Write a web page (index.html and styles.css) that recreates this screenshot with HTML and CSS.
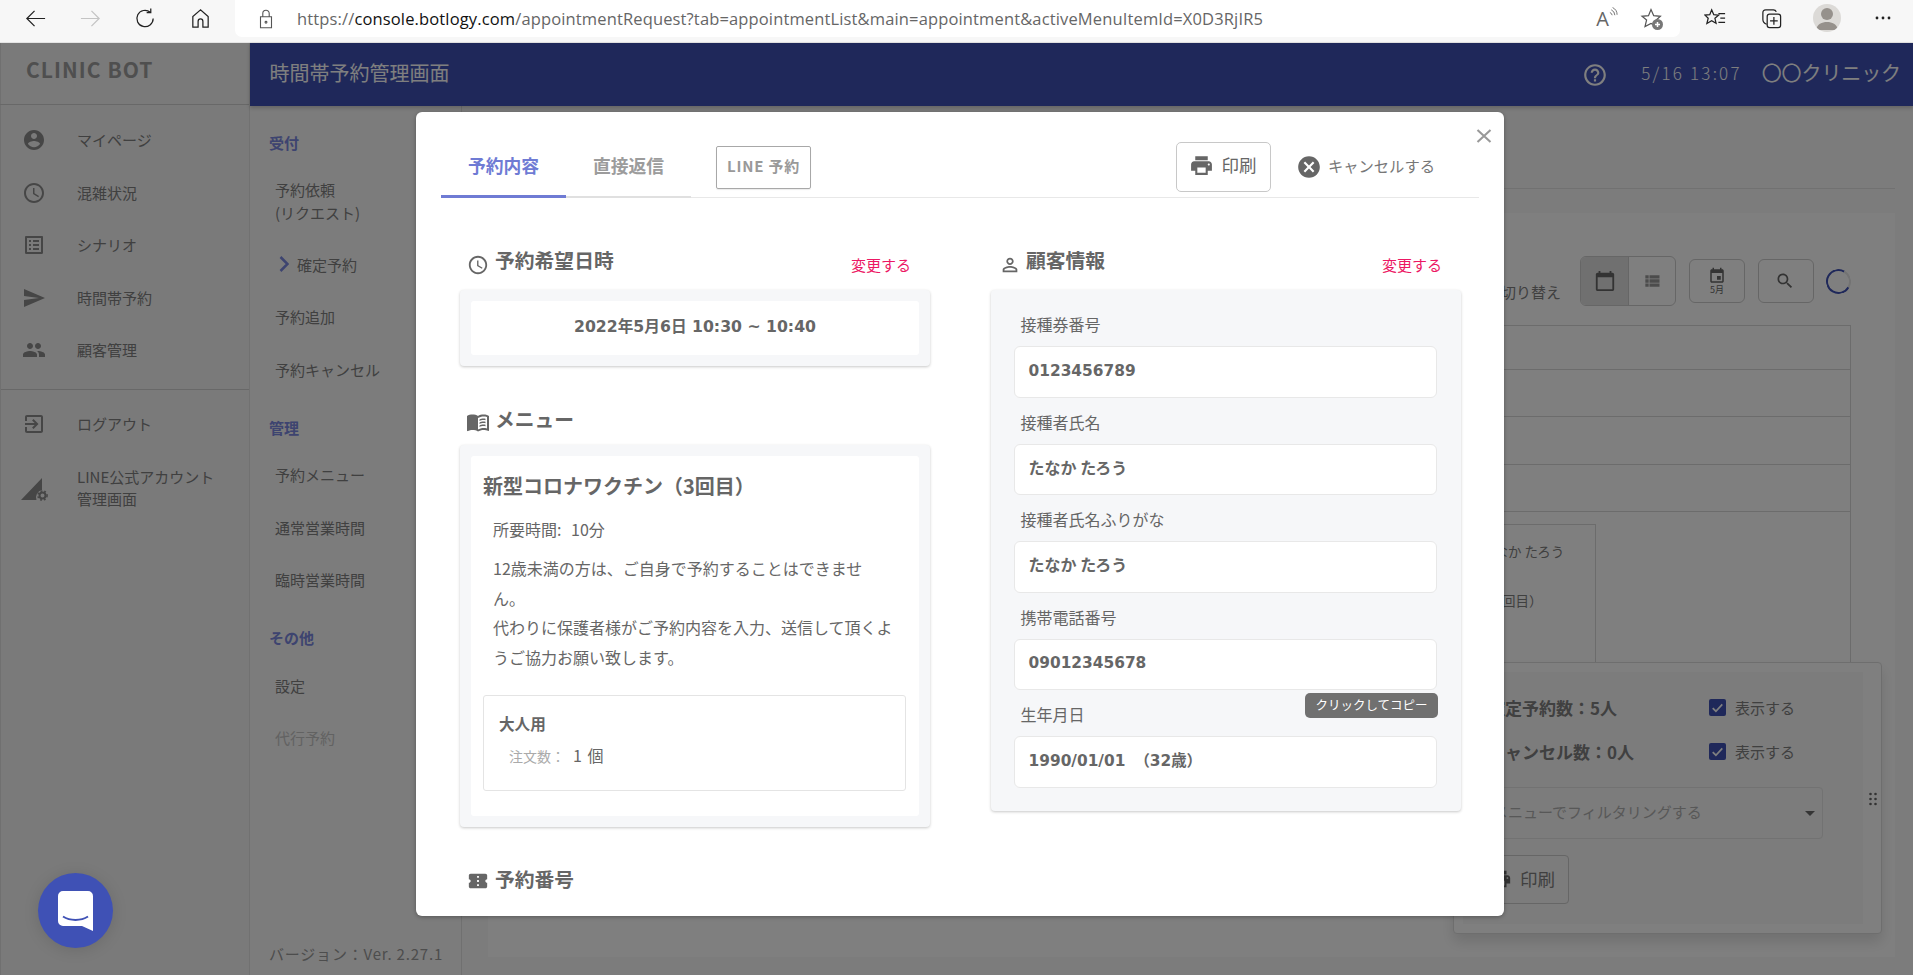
FILE: index.html
```html
<!DOCTYPE html>
<html lang="ja">
<head>
<meta charset="utf-8">
<title>時間帯予約管理画面</title>
<link rel="stylesheet" href="styles.css">
</head>
<body>
<svg class="sprite" aria-hidden="true">
  <symbol id="i-account" viewBox="0 0 24 24"><path d="M12 2C6.48 2 2 6.48 2 12s4.48 10 10 10 10-4.48 10-10S17.52 2 12 2zm0 3c1.66 0 3 1.34 3 3s-1.34 3-3 3-3-1.34-3-3 1.34-3 3-3zm0 14.2c-2.5 0-4.71-1.28-6-3.22.03-1.99 4-3.08 6-3.08 1.99 0 5.97 1.09 6 3.08-1.29 1.94-3.5 3.22-6 3.22z"/></symbol>
  <symbol id="i-clock" viewBox="0 0 24 24"><path d="M11.99 2C6.47 2 2 6.48 2 12s4.47 10 9.99 10C17.52 22 22 17.52 22 12S17.52 2 11.99 2zM12 20c-4.42 0-8-3.58-8-8s3.58-8 8-8 8 3.58 8 8-3.58 8-8 8zm.5-13H11v6l5.25 3.15.75-1.23-4.5-2.67z"/></symbol>
  <symbol id="i-list" viewBox="0 0 24 24"><path d="M19 5v14H5V5h14m1.1-2H3.9c-.5 0-.9.4-.9.9v16.2c0 .4.4.9.9.9h16.2c.4 0 .9-.5.9-.9V3.9c0-.5-.5-.9-.9-.9zM11 7h6v2h-6V7zm0 4h6v2h-6v-2zm0 4h6v2h-6v-2zM7 7h2v2H7V7zm0 4h2v2H7v-2zm0 4h2v2H7v-2z"/></symbol>
  <symbol id="i-send" viewBox="0 0 24 24"><path d="M2.01 21L23 12 2.01 3 2 10l15 2-15 2z"/></symbol>
  <symbol id="i-people" viewBox="0 0 24 24"><path d="M16 11c1.66 0 2.99-1.34 2.99-3S17.66 5 16 5c-1.66 0-3 1.34-3 3s1.34 3 3 3zm-8 0c1.66 0 2.99-1.34 2.99-3S9.66 5 8 5C6.34 5 5 6.34 5 8s1.34 3 3 3zm0 2c-2.33 0-7 1.17-7 3.5V19h14v-2.5c0-2.33-4.67-3.5-7-3.5zm8 0c-.29 0-.62.02-.97.05 1.16.84 1.97 1.97 1.97 3.45V19h6v-2.5c0-2.33-4.67-3.5-7-3.5z"/></symbol>
  <symbol id="i-exit" viewBox="0 0 24 24"><path d="M10.09 15.59L11.5 17l5-5-5-5-1.41 1.41L12.67 11H3v2h9.67l-2.58 2.59zM19 3H5c-1.11 0-2 .9-2 2v4h2V5h14v14H5v-4H3v4c0 1.1.89 2 2 2h14c1.1 0 2-.9 2-2V5c0-1.1-.9-2-2-2z"/></symbol>
  <symbol id="i-print" viewBox="0 0 24 24"><path d="M19 8H5c-1.66 0-3 1.34-3 3v6h4v4h12v-4h4v-6c0-1.66-1.34-3-3-3zm-3 11H8v-5h8v5zm3-7c-.55 0-1-.45-1-1s.45-1 1-1 1 .45 1 1-.45 1-1 1zm-1-9H6v4h12V3z"/></symbol>
  <symbol id="i-cancel" viewBox="0 0 24 24"><path d="M12 2C6.47 2 2 6.47 2 12s4.47 10 10 10 10-4.47 10-10S17.53 2 12 2zm5 13.59L15.59 17 12 13.41 8.41 17 7 15.59 10.59 12 7 8.41 8.41 7 12 10.59 15.59 7 17 8.41 13.41 12 17 15.59z"/></symbol>
  <symbol id="i-help" viewBox="0 0 24 24"><path d="M11 18h2v-2h-2v2zm1-16C6.48 2 2 6.48 2 12s4.48 10 10 10 10-4.48 10-10S17.52 2 12 2zm0 18c-4.41 0-8-3.59-8-8s3.59-8 8-8 8 3.59 8 8-3.59 8-8 8zm0-14c-2.21 0-4 1.79-4 4h2c0-1.1.9-2 2-2s2 .9 2 2c0 2-3 1.75-3 5h2c0-2.25 3-2.5 3-5 0-2.21-1.79-4-4-4z"/></symbol>
  <symbol id="i-person" viewBox="0 0 24 24"><path d="M12 5.9c1.16 0 2.1.94 2.1 2.1s-.94 2.1-2.1 2.1S9.9 9.16 9.9 8s.94-2.1 2.1-2.1m0 9c2.97 0 6.1 1.46 6.1 2.1v1.1H5.9V17c0-.64 3.13-2.1 6.1-2.1M12 4C9.79 4 8 5.79 8 8s1.79 4 4 4 4-1.79 4-4-1.79-4-4-4zm0 9c-2.67 0-8 1.34-8 4v3h16v-3c0-2.66-5.33-4-8-4z"/></symbol>
  <symbol id="i-book" viewBox="0 0 24 24"><path d="M21 5c-1.11-.35-2.33-.5-3.5-.5-1.95 0-4.05.4-5.5 1.5-1.45-1.1-3.55-1.5-5.5-1.5S2.45 4.9 1 6v14.65c0 .25.25.5.5.5.1 0 .15-.05.25-.05C3.1 20.45 5.05 20 6.5 20c1.95 0 4.05.4 5.5 1.5 1.35-.85 3.8-1.5 5.5-1.5 1.65 0 3.35.3 4.75 1.05.1.05.15.05.25.05.25 0 .5-.25.5-.5V6c-.6-.45-1.25-.75-2-1zm0 13.5c-1.1-.35-2.3-.5-3.5-.5-1.7 0-4.15.65-5.5 1.5V8c1.35-.85 3.8-1.5 5.5-1.5 1.2 0 2.4.15 3.5.5v11.5z"/><path d="M13.5 9.5c1-.6 2.6-1 4-1 .7 0 1.5.1 2 .2v1.5c-.6-.1-1.3-.2-2-.2-1.5 0-3 .4-4 1zM13.5 12.5c1-.6 2.6-1 4-1 .7 0 1.5.1 2 .2v1.5c-.6-.1-1.3-.2-2-.2-1.5 0-3 .4-4 1zM13.5 15.5c1-.6 2.6-1 4-1 .7 0 1.5.1 2 .2v1.5c-.6-.1-1.3-.2-2-.2-1.5 0-3 .4-4 1z"/></symbol>
  <symbol id="i-ticket" viewBox="0 0 24 24"><path d="M22 10V6c0-1.11-.9-2-2-2H4c-1.1 0-1.99.89-1.99 2v4c1.1 0 1.99.9 1.99 2s-.89 2-2 2v4c0 1.1.9 2 2 2h16c1.1 0 2-.9 2-2v-4c-1.1 0-2-.9-2-2s.9-2 2-2zm-9 7.5h-2v-2h2v2zm0-4.5h-2v-2h2v2zm0-4.5h-2v-2h2v2z"/></symbol>
  <symbol id="i-cal" viewBox="0 0 24 24"><path d="M20 3h-1V1h-2v2H7V1H5v2H4c-1.1 0-2 .9-2 2v16c0 1.1.9 2 2 2h16c1.1 0 2-.9 2-2V5c0-1.1-.9-2-2-2zm0 18H4V8h16v13z"/></symbol>
  <symbol id="i-event" viewBox="0 0 24 24"><path d="M17 12h-5v5h5v-5zM16 1v2H8V1H6v2H5c-1.11 0-1.99.9-1.99 2L3 19c0 1.1.89 2 2 2h14c1.1 0 2-.9 2-2V5c0-1.1-.9-2-2-2h-1V1h-2zm3 18H5V8h14v11z"/></symbol>
  <symbol id="i-viewlist" viewBox="0 0 24 24"><path d="M4 14h4v-4H4v4zm0 5h4v-4H4v4zM4 9h4V5H4v4zm5 5h12v-4H9v4zm0 5h12v-4H9v4zM9 5v4h12V5H9z"/></symbol>
  <symbol id="i-search" viewBox="0 0 24 24"><path d="M15.5 14h-.79l-.28-.27C15.41 12.59 16 11.11 16 9.5 16 5.91 13.09 3 9.5 3S3 5.91 3 9.5 5.91 16 9.5 16c1.61 0 3.09-.59 4.23-1.57l.27.28v.79l5 4.99L20.49 19l-4.99-5zm-6 0C7.01 14 5 11.99 5 9.5S7.01 5 9.5 5 14 7.01 14 9.5 11.99 14 9.5 14z"/></symbol>
</svg>

<div class="toolbar">
  <span class="tb-btn"><svg class="tb-ico" viewBox="0 0 24 24"><path d="M22 12H3M11 4l-8 8 8 8"/></svg></span>
  <span class="tb-btn"><svg class="tb-ico tb-ico-off" viewBox="0 0 24 24"><path d="M2 12h19M13 4l8 8-8 8"/></svg></span>
  <span class="tb-btn"><svg class="tb-ico" viewBox="0 0 24 24"><path d="M20 12a8.5 8.5 0 1 1-3-6.5M17.5 1.5v4.3h-4.3"/></svg></span>
  <span class="tb-btn"><svg class="tb-ico" viewBox="0 0 24 24"><path d="M12 3 4 10v11h5.5v-6a2.5 2.5 0 0 1 5 0v6H20V10z"/></svg></span>
  <div class="address">
    <svg class="tb-lock" viewBox="0 0 18 24"><path d="M3 9.5h12v12H3zM5.5 9.5V6a3.5 3.5 0 0 1 7 0v3.5"/><circle cx="9" cy="15.5" r="1" /></svg>
    <span class="url">https://<b class="url-host">console.botlogy.com</b>/appointmentRequest?tab=appointmentList&amp;main=appointment&amp;activeMenuItemId=X0D3RjIR5</span>
    <span class="read-aloud">A<svg viewBox="0 0 10 12"><path d="M1 6a4 4 0 0 1 2.500 3M2.500 3a7 7 0 0 1 4 6M4 .5a9 9 0 0 1 5 8"/></svg></span>
    <svg class="star-add" viewBox="0 0 24 24"><path d="M11 2.500l2.700 6.200 6.700.6-5 4.500 1 5.500-5.400-2.900-6 3.200 1.600-6.600L2 9.300l6.500-.6z"/><circle class="star-dot" cx="17.500" cy="17.500" r="5.500"/><path class="star-plus" d="M17.500 15v5M15 17.500h5"/></svg>
  </div>
  <span class="tb-right"><svg class="tb-ico" viewBox="0 0 24 24"><path d="M8 3l2.200 5 5 .5-3.800 3.300 1.200 5.200-4.600-2.800-5 3 1.400-5.500L1 8.500l5-.5zM15 7h7M17 11.500h5M15 16h7"/></svg></span>
  <span class="tb-right"><svg class="tb-ico" viewBox="0 0 24 24"><path d="M7 18C4 17 3 15 3 13V6c0-2 1-3 3-3h8c1.500 0 2.500.8 3 2"/><rect x="7.500" y="7.500" width="14" height="14" rx="2.500"/><path d="M14.500 10.500v8M10.500 14.500h8"/></svg></span>
  <span class="tb-right"><span class="avatar"><svg viewBox="0 0 28 28"><circle cx="14" cy="10" r="6"/><path d="M3 26c1-6 6-8 11-8s10 2 11 8z"/></svg></span></span>
  <span class="tb-right"><svg class="tb-dots" viewBox="0 0 16 4"><circle cx="2" cy="2" r="1.400"/><circle cx="8" cy="2" r="1.400"/><circle cx="14" cy="2" r="1.400"/></svg></span>
</div>

<div class="app">
  <aside class="side">
    <div class="brand">CLINIC BOT</div>
    <nav class="side-nav">
      <a class="side-item"><svg class="side-ico"><use href="#i-account"/></svg>マイページ</a>
      <a class="side-item"><svg class="side-ico"><use href="#i-clock"/></svg>混雑状況</a>
      <a class="side-item"><svg class="side-ico"><use href="#i-list"/></svg>シナリオ</a>
      <a class="side-item"><svg class="side-ico"><use href="#i-send"/></svg>時間帯予約</a>
      <a class="side-item"><svg class="side-ico"><use href="#i-people"/></svg>顧客管理</a>
    </nav>
    <nav class="side-nav side-nav-bottom">
      <a class="side-item"><svg class="side-ico"><use href="#i-exit"/></svg>ログアウト</a>
      <a class="side-item"><svg class="side-ico side-ico-line" viewBox="0 0 27 24"><path d="M0 23 21 1v12a7.500 7.500 0 0 0-5.500 10z"/><circle class="gear-ring" cx="21.500" cy="18.500" r="3"/><circle class="gear-teeth" cx="21.500" cy="18.500" r="4.600"/></svg><span>LINE公式アカウント<br>管理画面</span></a>
    </nav>
  </aside>

  <div class="content">
    <header class="topbar">
      <h1 class="topbar-title">時間帯予約管理画面</h1>
      <svg class="topbar-help"><use href="#i-help"/></svg>
      <span class="topbar-time">5/16 13:07</span>
      <span class="topbar-clinic">〇〇クリニック</span>
    </header>
    <div class="content-body">
      <aside class="subnav">
        <div class="subnav-title">受付</div>
        <a class="subnav-item subnav-item-tall">予約依頼<br>(リクエスト)</a>
        <a class="subnav-item subnav-item-on"><svg class="chev" viewBox="0 0 10 16"><path d="M1.500 1 8.500 8l-7 7"/></svg>確定予約</a>
        <a class="subnav-item">予約追加</a>
        <a class="subnav-item">予約キャンセル</a>
        <div class="subnav-title">管理</div>
        <a class="subnav-item">予約メニュー</a>
        <a class="subnav-item">通常営業時間</a>
        <a class="subnav-item">臨時営業時間</a>
        <div class="subnav-title">その他</div>
        <a class="subnav-item">設定</a>
        <a class="subnav-item subnav-item-off">代行予約</a>
        <div class="version">バージョン：Ver. 2.27.1</div>
      </aside>
      <main class="main">
        <div class="main-head"></div>
        <section class="sheet">
          <div class="controls">
            <span class="controls-label">表示切り替え</span>
            <div class="toggle">
              <span class="toggle-btn toggle-btn-on"><svg class="ctl-ico-big"><use href="#i-cal"/></svg></span>
              <span class="toggle-btn"><svg class="ctl-ico-small"><use href="#i-viewlist"/></svg></span>
            </div>
            <span class="ctl-btn ctl-btn-month"><svg class="ctl-ico-month"><use href="#i-event"/></svg><span class="ctl-month">5月</span></span>
            <span class="ctl-btn"><svg class="ctl-ico-search"><use href="#i-search"/></svg></span>
            <span class="spinner"></span>
          </div>
          <div class="grid">
            <div class="grid-row"></div>
            <div class="grid-row"></div>
            <div class="grid-row"></div>
            <div class="grid-row"></div>
            <div class="grid-row grid-row-events">
              <div class="event">
                <span>たなか たろう</span>
                <span>（3回目）</span>
              </div>
            </div>
          </div>
        </section>
        <div class="float-panel">
          <div class="float-inner">
            <div class="float-row"><b class="float-count">確定予約数：5人</b><span class="check"><svg viewBox="0 0 16 16"><path d="M3.500 8.500 6.500 11.500 12.500 5"/></svg></span><span>表示する</span></div>
            <div class="float-row"><b class="float-count">キャンセル数：0人</b><span class="check"><svg viewBox="0 0 16 16"><path d="M3.500 8.500 6.500 11.500 12.500 5"/></svg></span><span>表示する</span></div>
            <div class="float-select"><span>メニューでフィルタリングする</span><i class="caret"></i></div>
            <div class="float-print"><svg class="float-print-ico"><use href="#i-print"/></svg>印刷</div>
          </div>
          <svg class="drag" viewBox="0 0 8 14"><circle cx="1.500" cy="2" r="1.300"/><circle cx="6.500" cy="2" r="1.300"/><circle cx="1.500" cy="7" r="1.300"/><circle cx="6.500" cy="7" r="1.300"/><circle cx="1.500" cy="12" r="1.300"/><circle cx="6.500" cy="12" r="1.300"/></svg>
        </div>
      </main>
    </div>
  </div>
</div>

<div class="backdrop"></div>

<div class="modal">
  <svg class="modal-close" viewBox="0 0 16 16"><path d="M1.500 2l13 12M14.500 2l-13 12"/></svg>
  <div class="modal-head">
    <a class="tab tab-on">予約内容</a>
    <a class="tab">直接返信</a>
    <a class="line-btn">LINE 予約</a>
    <a class="print-btn"><svg class="print-ico"><use href="#i-print"/></svg>印刷</a>
    <a class="cancel-btn"><svg class="cancel-ico"><use href="#i-cancel"/></svg>キャンセルする</a>
  </div>
  <div class="modal-body">
    <div class="col">
      <div class="sec-head sec-head-link">
        <h2 class="sec-title"><svg class="sec-ico"><use href="#i-clock"/></svg>予約希望日時</h2>
        <a class="change">変更する</a>
      </div>
      <div class="card">
        <div class="card-inner date-text">2022年5月6日 10:30 ~ 10:40</div>
      </div>
      <div class="sec-head sec-head-next">
        <h2 class="sec-title"><svg class="sec-ico sec-ico-book"><use href="#i-book"/></svg>メニュー</h2>
      </div>
      <div class="card">
        <div class="card-inner menu-inner">
          <h3 class="menu-name">新型コロナワクチン（3回目）</h3>
          <p class="menu-time">所要時間: 10分</p>
          <p class="menu-desc">12歳未満の方は、ご自身で予約することはできません。<br>代わりに保護者様がご予約内容を入力、送信して頂くようご協力お願い致します。</p>
          <div class="option">
            <div class="option-name">大人用</div>
            <div class="option-qty"><span class="option-label">注文数：</span>1 個</div>
          </div>
        </div>
      </div>
      <div class="sec-head sec-head-last">
        <h2 class="sec-title"><svg class="sec-ico"><use href="#i-ticket"/></svg>予約番号</h2>
      </div>
    </div>
    <div class="col">
      <div class="sec-head sec-head-link">
        <h2 class="sec-title sec-title-person"><svg class="sec-ico-person"><use href="#i-person"/></svg>顧客情報</h2>
        <a class="change">変更する</a>
      </div>
      <div class="card card-form">
        <label class="field-label">接種券番号</label>
        <div class="value num">0123456789</div>
        <label class="field-label">接種者氏名</label>
        <div class="value">たなか たろう</div>
        <label class="field-label">接種者氏名ふりがな</label>
        <div class="value">たなか たろう</div>
        <label class="field-label">携帯電話番号</label>
        <div class="value num">09012345678<span class="tip">クリックしてコピー</span></div>
        <label class="field-label">生年月日</label>
        <div class="value num">1990/01/01<span class="value-age">（32歳）</span></div>
      </div>
    </div>
  </div>
</div>

<a class="chat">
  <svg viewBox="0 0 35 40"><path class="chat-bubble" d="M5 0h25a5 5 0 0 1 5 5v35l-11-5H5a5 5 0 0 1-5-5V5a5 5 0 0 1 5-5z"/><path class="chat-smile" d="M5 25.500c7 4.500 18 4.500 25 0"/></svg>
</a>
</body>
</html>
```

FILE: styles.css
```css
* { box-sizing: border-box; }
html, body { margin: 0; height: 975px; overflow: hidden; }
body {
  position: relative;
  font-family: "Noto Sans CJK JP", sans-serif;
  font-size: 15px;
  color: #808080;
  background: #f8f8f8;
  text-spacing-trim: space-all;
}
h1, h2, h3, p { margin: 0; font-weight: inherit; font-size: inherit; }
.sprite { display: none; }

/* browser toolbar */
.toolbar {
  height: 43px;
  display: flex;
  background: #f7f7f7;
  border-bottom: 1px solid #e4e4e4;
  padding-left: 7.5px;
}
.tb-btn { width: 55px; height: 36px; display: flex; align-items: center; justify-content: center; flex: none; }
.tb-ico { width: 23px; height: 23px; fill: none; stroke: #222; stroke-width: 1.300; }
.tb-ico-off { stroke: #c4c4c4; }
.address {
  margin-left: 7.500px;
  width: 1445px;
  height: 37px;
  background: #fff;
  border-radius: 0 0 7px 7px;
  display: flex;
  align-items: center;
  padding-left: 22px;
  flex: none;
}
.tb-lock { width: 18px; height: 22px; fill: none; stroke: #555; stroke-width: 1.200; flex: none; }
.url {
  margin-left: 22px;
  font-family: "Open Sans", sans-serif;
  font-size: 16.500px;
  color: #666;
  white-space: nowrap;
  letter-spacing: .14px;
}
.url-host { font-weight: 400; color: #111; }
.read-aloud {
  margin-left: auto;
  font-family: "Open Sans", sans-serif;
  font-size: 20px;
  color: #666;
  display: flex;
  align-items: flex-start;
  line-height: 22px;
}
.read-aloud svg { width: 9px; height: 11px; margin-top: -1px; fill: none; stroke: #666; stroke-width: 1; }
.star-add { width: 24px; height: 24px; margin: 0 16px 0 22px; fill: none; stroke: #555; stroke-width: 1.200; flex: none; }
.star-dot { fill: #777; stroke: none; }
.star-plus { stroke: #fff; stroke-width: 1.500; }
.tb-right { width: 56px; height: 36px; display: flex; align-items: center; justify-content: center; flex: none; }
.address + .tb-right { margin-left: 7px; }
.avatar { width: 28px; height: 28px; border-radius: 50%; background: #dcdad7; overflow: hidden; display: block; }
.avatar svg { display: block; width: 28px; height: 28px; fill: #96918c; }
.tb-dots { width: 16px; height: 4px; fill: #222; }

/* app frame */
.app { display: flex; height: 932px; }
.side {
  width: 250px;
  flex: none;
  background: #f4f4f4;
  border-left: 1px solid #e0e0e0;
  border-right: 1px solid #e2e2e2;
}
.brand {
  height: 62px;
  padding: 0 0 9px 26px;
  display: flex;
  align-items: center;
  border-bottom: 1px solid #d0d0d0;
  font-size: 21px;
  font-weight: 700;
  color: #9e9e9e;
  letter-spacing: 1.050px;
  margin-left: -1px;
}
.side-nav { padding: 9px 0 12px; border-bottom: 1px solid #d0d0d0; }
.side-nav-bottom { border-bottom: 0; padding-top: 8px; }
.side-item { height: 52.500px; display: flex; align-items: center; color: #808080; font-size: 15px; line-height: 22.500px; }
.side-nav-bottom .side-item:last-child { height: 76px; }
.side-ico { width: 24px; height: 24px; margin: 0 31px 0 21px; flex: none; }
.side-item .side-ico { fill: #8c8c8c; }
.side-item .side-ico-line { width: 27px; height: 24px; margin: 2px 29px 0 20px; }
.gear-ring { fill: none; stroke: #8c8c8c; stroke-width: 2; }
.gear-teeth { fill: none; stroke: #8c8c8c; stroke-width: 1.500; stroke-dasharray: 1.800 2.020; }

.content { flex: 1; display: flex; flex-direction: column; min-width: 0; }
.topbar {
  height: 63px;
  background: #3f51b5;
  color: #fff;
  display: flex;
  align-items: center;
  padding: 0 12px 5px 19.500px;
  box-shadow: 0 2px 4px rgba(0,0,0,.2);
  position: relative;
}
.topbar-title { font-size: 20px; }
.topbar-help { width: 26px; height: 26px; margin: 6px 0 0 auto; fill: #fff; }
.topbar-time { margin-left: 33px; font-size: 17px; letter-spacing: 2.200px; font-weight: 300; }
.topbar-clinic { margin-left: 20px; font-size: 20px; letter-spacing: -.1px; white-space: nowrap; }

.content-body { flex: 1; display: flex; min-height: 0; }
.subnav {
  width: 212px;
  flex: none;
  background: #f8f8f8;
  border-right: 1px solid #e0e0e0;
  padding: 5px 0 10px 19px;
  display: flex;
  flex-direction: column;
}
.subnav-title { margin: 21px 0 10px; height: 22px; line-height: 22px; font-size: 15px; font-weight: 700; color: #7b88e0; flex: none; }
.subnav-item { height: 52.500px; padding-left: 6px; display: flex; align-items: center; line-height: 23px; color: #808080; flex: none; }
.subnav-item-tall { height: 74px; display: block; padding-top: 14px; }
.subnav-item-on { padding-left: 10px; }
.chev { width: 10px; height: 16px; margin-right: 8px; fill: none; stroke: #7b88e0; stroke-width: 2.500; }
.subnav-item-off { color: #c4c4c4; }
.version { margin-top: auto; line-height: 22px; color: #9a9a9a; font-size: 15px; letter-spacing: .8px; white-space: nowrap; }

.main { flex: 1; min-width: 0; padding: 0 18px 18px 26px; display: flex; flex-direction: column; }
.main-head { height: 83px; border-bottom: 1px solid #e2e2e2; flex: none; margin-bottom: 24px; }
.sheet { flex: 1; background: #fff; padding: 43px 44px 0 32px; min-height: 0; }
.controls { height: 50px; display: flex; align-items: center; justify-content: flex-end; margin-bottom: 19px; }
.controls-label { margin: 21px 19px 0 0; font-size: 15px; color: #808080; }
.toggle { width: 96px; height: 50px; display: flex; border: 1px solid #ccc; border-radius: 6px; overflow: hidden; margin-right: 13px; }
.toggle-btn { flex: 1; display: flex; align-items: center; justify-content: center; }
.toggle-btn-on { background: #e0e0e0; border-right: 1px solid #ccc; flex: none; width: 48px; }
.ctl-ico-big { width: 22px; height: 22px; fill: #666; }
.ctl-ico-small { width: 20px; height: 20px; fill: #999; }
.ctl-btn { width: 56px; height: 44px; border: 1px solid #ccc; border-radius: 6px; display: flex; align-items: center; justify-content: center; margin-right: 13px; }
.ctl-btn-month { flex-direction: column; margin-right: 13px; }
.ctl-ico-month { width: 18px; height: 18px; fill: #666; }
.ctl-month { font-size: 9px; line-height: 11px; color: #666; margin-top: -1px; }
.ctl-ico-search { width: 20px; height: 20px; margin-left: -3px; fill: #666; }
.spinner {
  width: 25px;
  height: 25px;
  margin-left: -1px;
  border-radius: 50%;
  border: 2px solid #e6e6e6;
  border-left-color: #3f51b5;
  border-bottom-color: #3f51b5;
  border-top-color: #3f51b5;
  transform: rotate(-15deg);
  flex: none;
}
.grid { height: 580px; border: 1px solid #d8d8d8; border-bottom: 0; }
.grid-row { height: 47.300px; border-bottom: 1px solid #d8d8d8; }
.grid-row:first-child { height: 44px; }
.grid-row-events { height: auto; border-bottom: 0; padding: 12px 0 0; display: flex; justify-content: flex-end; padding-right: 254px; }
.event {
  width: 160px;
  height: 380px;
  border: 1px solid #d8d8d8;
  border-right-width: 1px;
  padding: 16px 0 0 44px;
  display: flex;
  flex-direction: column;
  gap: 29px;
  font-size: 13.500px;
  line-height: 20px;
  color: #808080;
  white-space: nowrap;
}

.float-panel {
  position: absolute;
  right: 31px;
  bottom: 41px;
  width: 429px;
  height: 272px;
  background: #fff;
  border: 1px solid #ddd;
  border-radius: 4px;
  padding: 9px 18px 9px 9px;
  box-shadow: 0 8px 14px rgba(0,0,0,.12);
}
.float-inner { height: 100%; background: #f8f8f8; padding: 13px 40px 0 25px; }
.float-row { height: 44px; display: flex; align-items: center; font-size: 15px; color: #808080; }
.float-count { width: 221px; font-size: 17px; font-weight: 700; white-space: nowrap; }
.check { width: 17px; height: 17px; margin-right: 9px; background: #3f51b5; border-radius: 2px; display: block; flex: none; }
.check svg { display: block; width: 17px; height: 17px; fill: none; stroke: #fff; stroke-width: 1.600; }
.float-select {
  margin-top: 14px;
  height: 52px;
  border: 1px solid #e4e4e4;
  border-radius: 4px;
  display: flex;
  align-items: center;
  justify-content: space-between;
  padding: 0 3px 4px 4px;
  color: #b0b0b0;
  font-size: 15px;
  white-space: nowrap;
}
.caret { width: 0; height: 0; margin: 4px 4px 0 0; border: 5px solid transparent; border-top: 5px solid #6a6a6a; border-bottom: 0; }
.float-print {
  margin-top: 16px;
  width: 81px;
  height: 49px;
  border: 1px solid #ccc;
  border-radius: 4px;
  display: flex;
  align-items: center;
  justify-content: flex-end;
  padding: 0 13px 2px 0;
  gap: 8px;
  font-size: 17.500px;
  color: #808080;
}
.float-print-ico { width: 22px; height: 22px; fill: #666; }
.drag { position: absolute; left: 415px; top: 129px; width: 8px; height: 14px; fill: #666; }

/* overlay */
.backdrop { position: absolute; left: 0; right: 0; top: 43px; bottom: 0; background: rgba(0,0,0,.5); }
.chat {
  position: absolute;
  left: 37.500px;
  top: 872.500px;
  width: 75px;
  height: 75px;
  border-radius: 50%;
  background: #3f51b5;
  box-shadow: 0 2px 16px rgba(0,0,0,.12);
  display: flex;
  align-items: center;
  justify-content: center;
}
.chat svg { width: 35px; height: 40px; margin-top: 2px; }
.chat-bubble { fill: #fff; }
.chat-smile { fill: none; stroke: #3f51b5; stroke-width: 2; }

.modal {
  position: absolute;
  left: 416px;
  top: 112px;
  width: 1088px;
  height: 804px;
  background: #fff;
  border-radius: 6px;
  overflow: hidden;
  color: #666;
  box-shadow: 0 1px 4px rgba(0,0,0,.3);
}
.modal-close { position: absolute; top: 16px; right: 12px; width: 16px; height: 16px; fill: none; stroke: #999; stroke-width: 2.100; }
.modal-head {
  margin: 0 25px;
  height: 86px;
  display: flex;
  align-items: flex-end;
  border-bottom: 1px solid #e8e8e8;
  padding-right: 44px;
}
.tab {
  width: 125px;
  height: 50px;
  margin-bottom: -1px;
  padding-top: 1px;
  text-align: center;
  font-size: 17.800px;
  line-height: 33px;
  font-weight: 700;
  color: #9c9c9c;
  border-bottom: 2px solid #e0e0e0;
}
.tab-on { color: #6f7bd4; border-bottom: 3px solid #6f7bd4; }
.line-btn {
  margin: 0 0 8px 25px;
  width: 95px;
  height: 43px;
  padding-bottom: 5px;
  border: 1px solid #a8a8a8;
  border-radius: 2px;
  display: flex;
  align-items: center;
  justify-content: center;
  font-size: 15px;
  letter-spacing: .8px;
  font-weight: 700;
  color: #999;
  box-shadow: 0 1px 1px rgba(0,0,0,.08);
}
.print-btn {
  margin: 0 27px 5px auto;
  width: 95px;
  height: 50px;
  padding-bottom: 5px;
  border: 1px solid #c8c8c8;
  border-radius: 5px;
  display: flex;
  align-items: center;
  justify-content: center;
  gap: 7px;
  font-size: 17.500px;
  color: #666;
}
.print-ico { width: 25px; height: 25px; margin-top: 2px; margin-left: -1px; fill: #666; }
.cancel-btn { margin-bottom: 17px; height: 30px; display: flex; align-items: center; gap: 8px; font-size: 15.300px; color: #777; white-space: nowrap; }
.cancel-ico { width: 26px; height: 26px; margin: 3px -2px 0 -2px; fill: #666; }

.modal-body { display: flex; gap: 61px; padding: 49px 0 0 44px; }
.col { width: 470px; flex: none; }
.sec-head { display: flex; justify-content: space-between; align-items: flex-start; height: 28px; margin-bottom: 12px; }
.sec-head-link { height: 31px; }
.sec-head-next { margin-top: 39px; }
.sec-head-last { margin-top: 38px; }
.sec-title { display: flex; align-items: center; line-height: 28px; font-size: 19.800px; font-weight: 700; color: #666; padding-left: 7px; white-space: nowrap; }
.sec-head-link .sec-title { margin-top: -2.400px; }
.sec-head-next .sec-title { margin-top: -1px; }
.sec-title-person { padding-left: 8px; }
.sec-ico { width: 22px; height: 22px; margin-right: 6px; margin-top: 4px; fill: #666; flex: none; }
.sec-head-link .sec-ico { margin-top: 9px; }
.sec-head-next .sec-ico { margin-top: 6px; }
.sec-ico-book { width: 24px; height: 24px; margin-left: -1px; margin-right: 5px; }
.sec-ico-person { width: 22px; height: 22px; margin-right: 5px; margin-top: 9px; fill: #666; flex: none; }
.change { margin: 7px 19px 0 0; line-height: 22px; font-size: 15px; color: #ec1864; }

.card { background: #f6f7f9; border-radius: 4px; padding: 11px; box-shadow: 0 1px 3px rgba(0,0,0,.22); }
.card-inner { background: #fff; border-radius: 3px; }
.date-text { height: 54px; padding-bottom: 5px; display: flex; align-items: center; justify-content: center; font-family: "DejaVu Sans", "Noto Sans CJK JP", sans-serif; font-size: 15.700px; font-weight: 700; color: #666; }
.menu-inner { padding: 15px 13px 25px 12px; }
.menu-name { font-size: 20px; line-height: 30px; font-weight: 700; color: #666; white-space: nowrap; }
.menu-time { margin: 13px 0 0 10px; font-size: 16px; line-height: 30px; word-spacing: 6px; }
.menu-desc { margin: 10px 0 0 10px; width: 401px; font-size: 16px; line-height: 29.600px; }
.option { margin-top: 23px; height: 96px; border: 1px solid #e4e4e4; border-radius: 3px; padding: 15px 0 0 15px; }
.option-name { font-size: 15.600px; line-height: 24px; font-weight: 700; color: #666; }
.option-qty { margin: 8px 0 0 10px; line-height: 24px; font-size: 16px; word-spacing: 2px; }
.option-label { font-size: 14px; color: #aaa; margin-right: 8px; }

.card-form { padding: 24px 24px 23.500px 23px; }
.field-label { display: block; height: 24px; line-height: 21px; margin: 14px 0 8px; padding-left: 6.500px; font-size: 16px; color: #666; }
.field-label:first-child { margin-top: 0; }
.value { position: relative; height: 51.500px; background: #fff; border: 1px solid #e8e8e8; border-radius: 6px; padding: 10px 0 0 13.500px; font-size: 16px; line-height: 24px; font-weight: 700; color: #666; }
.num { font-family: "DejaVu Sans", "Noto Sans CJK JP", sans-serif; font-size: 15.400px; padding-top: 11.500px; }
.value-age { margin-left: 9px; }
.tip {
  position: absolute;
  right: -2px;
  top: calc(100% + 4px);
  width: 133px;
  height: 25px;
  background: #707070;
  border-radius: 5px;
  color: #fff;
  font-family: "Noto Sans CJK JP", sans-serif;
  font-size: 12.500px;
  font-weight: 400;
  line-height: 24px;
  text-align: center;
  white-space: nowrap;
}
```
